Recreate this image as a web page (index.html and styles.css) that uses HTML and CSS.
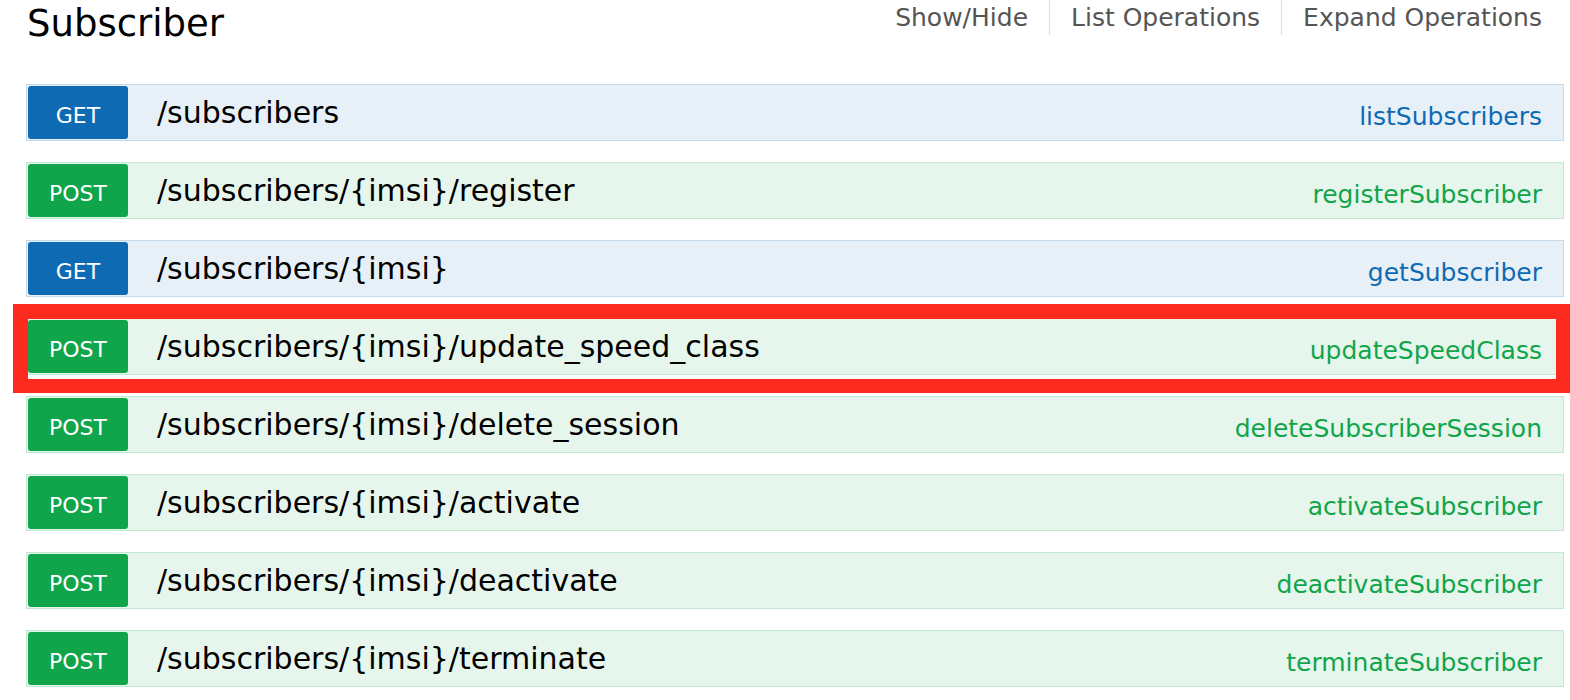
FILE: index.html
```html
<!DOCTYPE html>
<html lang="en">
<head>
    <meta charset="UTF-8">
    <title>Subscriber</title>
    <link rel="stylesheet" href="styles.css">
</head>
<body>
    <div class="resource">
        <div class="heading">
            <h2>Subscriber</h2>
            <ul class="options">
                <li>Show/Hide</li>
                <li>List Operations</li>
                <li>Expand Operations</li>
            </ul>
        </div>

        <ul class="endpoints">
            <li class="op get">
                <span class="method">GET</span>
                <span class="path">/subscribers</span>
                <span class="nickname">listSubscribers</span>
            </li>
            <li class="op post">
                <span class="method">POST</span>
                <span class="path">/subscribers/{imsi}/register</span>
                <span class="nickname">registerSubscriber</span>
            </li>
            <li class="op get">
                <span class="method">GET</span>
                <span class="path">/subscribers/{imsi}</span>
                <span class="nickname">getSubscriber</span>
            </li>
            <li class="op post marked">
                <span class="method">POST</span>
                <span class="path">/subscribers/{imsi}/update_speed_class</span>
                <span class="nickname">updateSpeedClass</span>
            </li>
            <li class="op post">
                <span class="method">POST</span>
                <span class="path">/subscribers/{imsi}/delete_session</span>
                <span class="nickname">deleteSubscriberSession</span>
            </li>
            <li class="op post">
                <span class="method">POST</span>
                <span class="path">/subscribers/{imsi}/activate</span>
                <span class="nickname">activateSubscriber</span>
            </li>
            <li class="op post">
                <span class="method">POST</span>
                <span class="path">/subscribers/{imsi}/deactivate</span>
                <span class="nickname">deactivateSubscriber</span>
            </li>
            <li class="op post">
                <span class="method">POST</span>
                <span class="path">/subscribers/{imsi}/terminate</span>
                <span class="nickname">terminateSubscriber</span>
            </li>
        </ul>
    </div>
</body>
</html>
```

FILE: styles.css
```css
body {
    margin: 0;
    padding: 0;
    background: #fff;
    font-family: "DejaVu Sans", "Liberation Sans", sans-serif;
    color: #000;
    overflow: hidden;
}
.resource {
    padding: 0 6px 0 26px;
}
/* titre + liens */
.heading {
    display: flex;
    justify-content: space-between;
    align-items: flex-start;
    height: 84px;
}
.heading h2 {
    margin: 0;
    padding: 2px 0 0 1px;
    font-size: 37px;
    font-weight: normal;
    line-height: 44px;
}
.options {
    list-style: none;
    margin: 0;
    padding: 0 22px 0 0;
    display: flex;
}
.options li {
    font-size: 25px;
    line-height: 35px;
    color: #555;
    padding: 0 21px;
    border-left: 1px solid #ddd;
}
.options li:first-child {
    border-left: none;
}
.options li:last-child {
    padding-right: 0;
}
/* operations */
.endpoints {
    list-style: none;
    margin: 0;
    padding: 0;
}
.op {
    display: flex;
    align-items: center;
    height: 53px;
    padding: 1px;
    margin-bottom: 21px;
    border: 1px solid;
    position: relative;
}
.op.get {
    background: #e7f0f7;
    border-color: #c3d9ec;
}
.op.post {
    background: #e7f6ec;
    border-color: #c3e8d1;
}
.method {
    width: 100px;
    height: 53px;
    line-height: 59px;
    border-radius: 3px;
    color: #fff;
    font-size: 22px;
    text-align: center;
}
.get .method {
    background: #0f6ab4;
}
.post .method {
    background: #10a54a;
}
.path {
    flex: 1;
    margin-left: 29px;
    font-size: 30px;
    padding-bottom: 1px;
}
.nickname {
    font-size: 25px;
    padding: 8px 20px 0 0;
}
.get .nickname {
    color: #0f6ab4;
}
.post .nickname {
    color: #10a54a;
}
/* cadre rouge de l'annotation */
.marked::after {
    content: "";
    position: absolute;
    left: -14px;
    right: -7px;
    top: -15px;
    bottom: -19px;
    border: 14px solid #fd2b1e;
    border-top-width: 15px;
    border-left-width: 15px;
}
```
